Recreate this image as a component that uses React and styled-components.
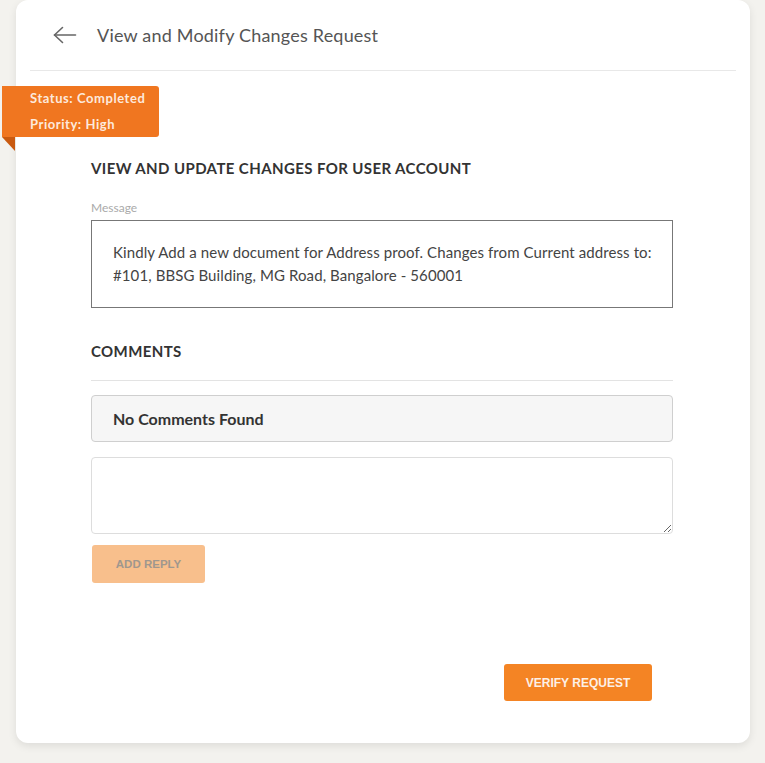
import React from "react";
import styled, { createGlobalStyle } from "styled-components";

const Global = createGlobalStyle`
  html, body { margin: 0; padding: 0; background: #f3f2ee; }
  body { font-family: Lato, "Open Sans", sans-serif; }
  * { box-sizing: border-box; }
`;

const Page = styled.div`
  padding: 0 15px 20px 16px;
`;

const Card = styled.div`
  position: relative;
  background: #fff;
  border-radius: 12px;
  box-shadow: 0 3px 8px rgba(0, 0, 0, 0.09);
  padding: 0 14px 42px;
`;

const Header = styled.div`
  height: 71px;
  display: flex;
  align-items: center;
  gap: 20px;
  padding-left: 23px;
  border-bottom: 1px solid #e8e8e8;
`;

const BackButton = styled.button`
  border: 0;
  background: none;
  padding: 0;
  display: flex;
  cursor: pointer;
`;

const Title = styled.h1`
  margin: 0;
  font-size: 18px;
  font-weight: 400;
  color: #555;
  letter-spacing: 0.2px;
`;

const Badge = styled.div`
  position: absolute;
  left: -14px;
  top: 86px;
  width: 157px;
  height: 51px;
  background: #f07620;
  border-radius: 0 3px 3px 0;
  padding: 0 0 0 28px;
  color: #fde9dc;
  font-size: 13px;
  font-weight: 700;
  letter-spacing: 0.55px;
  line-height: 26px;
  & > div:first-child { margin-top: -1px; }
  &::after {
    content: "";
    position: absolute;
    left: 0;
    top: 100%;
    border-top: 14px solid #c95a10;
    border-left: 13px solid transparent;
  }
`;

const Body = styled.div`
  padding: 0 63px 0 61px;
  display: flex;
  flex-direction: column;
`;

const SectionTitle = styled.h2`
  margin: ${(p) => p.$top}px 0 0;
  font-size: 15px;
  line-height: 20px;
  font-weight: 700;
  color: #333;
  letter-spacing: 0.4px;
`;

const Label = styled.div`
  margin-top: 22px;
  font-size: 12px;
  line-height: 16px;
  color: #aaa;
`;

const MessageBox = styled.div`
  margin-top: 4px;
  height: 88px;
  border: 1px solid #777;
  padding: 20px 10px 20px 21px;
  font-size: 15px;
  line-height: 23px;
  color: #444;
  letter-spacing: 0.1px;
`;

const Divider = styled.hr`
  margin: 19px 0 0;
  border: 0;
  border-top: 1px solid #e3e3e3;
`;

const EmptyBox = styled.div`
  margin-top: 14px;
  height: 47px;
  background: #f6f6f6;
  border: 1px solid #cfcfcf;
  border-radius: 4px;
  display: flex;
  align-items: center;
  padding-left: 21px;
  font-size: 16px;
  font-weight: 700;
  color: #333;
`;

const Reply = styled.textarea`
  margin-top: 15px;
  height: 77px;
  border: 1px solid #ddd;
  border-radius: 4px;
  font-family: inherit;
  font-size: 14px;
  padding: 8px;
  outline: none;
`;

const Button = styled.button`
  border: 0;
  border-radius: 3px;
  font-family: "Liberation Sans", Arial, sans-serif;
  font-weight: 700;
  text-transform: uppercase;
  cursor: pointer;
  background: ${(p) => (p.$disabled ? "#f8bf8c" : "#f48424")};
  color: ${(p) => (p.$disabled ? "#a0978e" : "#fdf0e6")};
`;

const AddReply = styled(Button)`
  margin: 11px 0 0 1px;
  width: 113px;
  height: 38px;
  font-size: 11.5px;
  align-self: flex-start;
`;

const Footer = styled.div`
  margin-top: 81px;
  display: flex;
  justify-content: flex-end;
  padding-right: 21px;
`;

const Verify = styled(Button)`
  width: 148px;
  height: 37px;
  font-size: 12px;
`;

export default function App() {
  return (
    <Page>
      <Global />
      <Card>
        <Header>
          <BackButton aria-label="Back">
            <svg width="24" height="18" viewBox="0 0 24 18" fill="none" stroke="#666" strokeWidth="1.6" strokeLinecap="round" strokeLinejoin="round">
              <path d="M1.5 9 H22.5" />
              <path d="M9.5 1.5 L1.5 9 L9.5 16.5" />
            </svg>
          </BackButton>
          <Title>View and Modify Changes Request</Title>
        </Header>
        <Badge>
          <div>Status: Completed</div>
          <div>Priority: High</div>
        </Badge>
        <Body>
          <SectionTitle $top={87}>VIEW AND UPDATE CHANGES FOR USER ACCOUNT</SectionTitle>
          <Label>Message</Label>
          <MessageBox>
            Kindly Add a new document for Address proof. Changes from Current address to: #101, BBSG Building, MG Road, Bangalore - 560001
          </MessageBox>
          <SectionTitle $top={33}>COMMENTS</SectionTitle>
          <Divider />
          <EmptyBox>No Comments Found</EmptyBox>
          <Reply />
          <AddReply $disabled>Add Reply</AddReply>
          <Footer>
            <Verify>Verify Request</Verify>
          </Footer>
        </Body>
      </Card>
    </Page>
  );
}
